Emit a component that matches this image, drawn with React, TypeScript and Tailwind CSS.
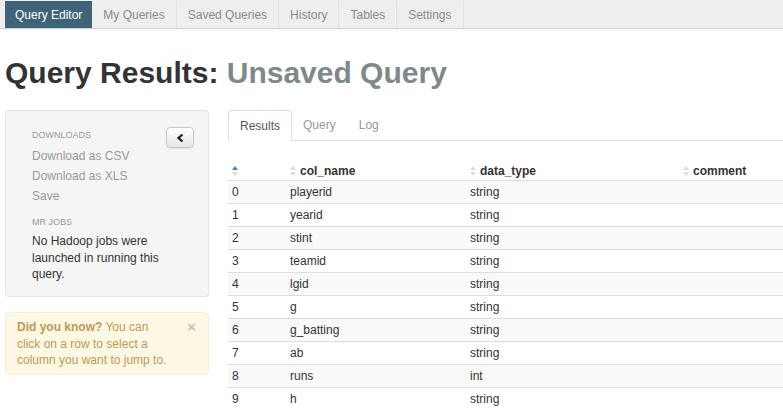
import React from "react";

const navItems = ["Query Editor", "My Queries", "Saved Queries", "History", "Tables", "Settings"];

const rows: [string, string][] = [
  ["playerid", "string"],
  ["yearid", "string"],
  ["stint", "string"],
  ["teamid", "string"],
  ["lgid", "string"],
  ["g", "string"],
  ["g_batting", "string"],
  ["ab", "string"],
  ["runs", "int"],
  ["h", "string"],
];

function SortIcon({ active }: { active?: boolean }) {
  return (
    <svg width="6" height="10" viewBox="0 0 6 10" className="inline-block mr-[4px] align-[-1px]">
      <path d="M3 0 L6 4 L0 4 Z" fill={active ? "#3a87c8" : "#dcdcdc"} />
      <path d="M0 6 L6 6 L3 10 Z" fill="#dcdcdc" />
    </svg>
  );
}

export default function App() {
  return (
    <div className="w-[783px] h-[410px] overflow-hidden bg-white font-['Liberation_Sans',Arial,sans-serif] text-[#333]">
      {/* top navbar */}
      <div className="h-[29px] bg-[#eeeeee] border-b border-[#d6d6d6] shadow-[0_1px_2px_rgba(0,0,0,0.06)] flex pl-[5px]">
        {navItems.map((item, i) => (
          <div
            key={item}
            className={
              i === 0
                ? "h-[27px] mt-[1px] px-[10px] flex items-center text-[12px] text-white bg-[#3f6479]"
                : "h-[27px] mt-[1px] px-[11px] flex items-center text-[12px] text-[#8a8a8a] border-r border-[#e2e2e2]"
            }
          >
            {item}
          </div>
        ))}
      </div>

      {/* title */}
      <h1 className="mt-[27px] ml-[5px] text-[30px] leading-[34px] font-bold">
        Query Results: <span className="text-[#7f898c]">Unsaved Query</span>
      </h1>

      <div className="flex mt-[20px] pl-[5px]">
        {/* left column */}
        <div className="w-[204px] shrink-0">
          <div className="relative h-[187px] bg-[#f5f5f5] border border-[#e3e3e3] rounded-[4px] pt-[18px] pl-[26px] pr-[14px]">
            <button className="absolute right-[14px] top-[16px] w-[28px] h-[21px] rounded-[4px] border border-[#c8c8c8] bg-gradient-to-b from-white to-[#e6e6e6] shadow-[0_1px_1px_rgba(0,0,0,0.08)] flex items-center justify-center">
              <svg width="7" height="8" viewBox="0 0 7 8">
                <path d="M5.5 0.5 L1.5 4 L5.5 7.5" stroke="#222" strokeWidth="2.2" fill="none" />
              </svg>
            </button>
            <div className="text-[9px] leading-[12px] text-[#999] uppercase">Downloads</div>
            <div className="mt-[5px] text-[12px] leading-[20px] text-[#999]">
              <div>Download as CSV</div>
              <div>Download as XLS</div>
              <div>Save</div>
            </div>
            <div className="mt-[10px] text-[9px] leading-[12px] text-[#999] uppercase">MR Jobs</div>
            <div className="mt-[5px] text-[12px] leading-[16.5px] text-[#333]">
              No Hadoop jobs were launched in running this query.
            </div>
          </div>

          <div className="relative mt-[15px] bg-[#fcf8e3] border border-[#fbeed5] rounded-[4px] pt-[6px] pb-[5px] pl-[11px] pr-[38px] text-[12px] leading-[16.5px] text-[#c09853]">
            <span className="absolute right-[12px] top-[5px] text-[15px] font-bold text-[#c9c2ad] leading-[17px]">×</span>
            <b>Did you know?</b> You can click on a row to select a column you want to jump to.
          </div>
        </div>

        {/* right content */}
        <div className="ml-[19px] flex-1 min-w-0">
          <div className="flex h-[31px] border-b border-[#dddddd]">
            <div className="h-[31px] px-[11px] flex items-center text-[12px] text-[#555] bg-white border border-[#dddddd] border-b-white rounded-t-[4px]">
              Results
            </div>
            <div className="pl-[11px] pr-[11px] flex items-center text-[12px] text-[#999]">Query</div>
            <div className="px-[12px] flex items-center text-[12px] text-[#999]">Log</div>
          </div>

          <table className="mt-[17px] w-[560px] table-fixed border-collapse text-[12px]">
            <colgroup>
              <col className="w-[58px]" />
              <col className="w-[180px]" />
              <col className="w-[213px]" />
              <col />
            </colgroup>
            <thead>
              <tr className="border-b border-[#dddddd]">
                <th className="text-left font-bold px-[4px] pt-[4px] pb-0 leading-[18px]">
                  <SortIcon active />
                </th>
                <th className="text-left font-bold px-[4px] pt-[4px] pb-0 leading-[18px]">
                  <SortIcon />col_name
                </th>
                <th className="text-left font-bold px-[4px] pt-[4px] pb-0 leading-[18px]">
                  <SortIcon />data_type
                </th>
                <th className="text-left font-bold px-[4px] pt-[4px] pb-0 leading-[18px]">
                  <SortIcon />comment
                </th>
              </tr>
            </thead>
            <tbody>
              {rows.map(([name, type], i) => (
                <tr key={name} className={i % 2 === 0 ? "bg-[#f9f9f9] border-b border-[#dddddd]" : "bg-white border-b border-[#dddddd]"}>
                  <td className="px-[4px] py-[2px] leading-[18px]">{i}</td>
                  <td className="px-[4px] py-[2px] leading-[18px]">{name}</td>
                  <td className="px-[4px] py-[2px] leading-[18px]">{type}</td>
                  <td className="px-[4px] py-[2px] leading-[18px]"></td>
                </tr>
              ))}
            </tbody>
          </table>
        </div>
      </div>
    </div>
  );
}
